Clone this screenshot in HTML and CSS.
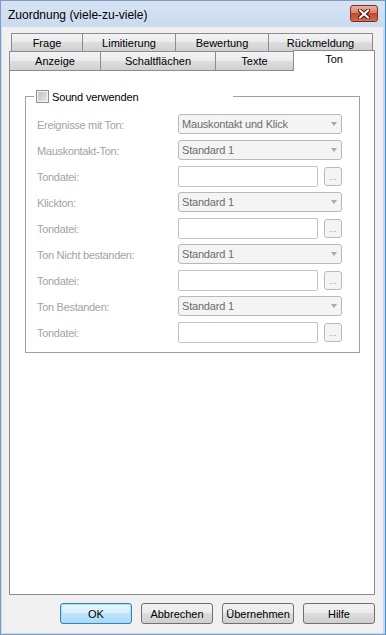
FILE: index.html
```html
<!DOCTYPE html>
<html lang="de">
<head>
  <meta charset="UTF-8" />
  <meta name="viewport" content="width=device-width, initial-scale=1.0"/>
  <title>Zuordnung (viele-zu-viele)</title>
  <link rel="stylesheet" href="styles.css">
</head>
<body>
  <div class="window">
    <div class="titlebar">
      <span class="title">Zuordnung (viele-zu-viele)</span>
      <div class="close">
        <svg width="12" height="10" viewBox="0 0 12 10">
          <path d="M2 1.5 L10 8.5 M10 1.5 L2 8.5" stroke="#3b1710" stroke-width="4" stroke-linecap="square"/>
          <path d="M2 1.5 L10 8.5 M10 1.5 L2 8.5" stroke="#ffffff" stroke-width="2" stroke-linecap="square"/>
        </svg>
      </div>
    </div>

    <div class="client">
      <div class="tabs">
        <div class="tab-row back">
          <div class="tab t-frage">Frage</div>
          <div class="tab t-limit">Limitierung</div>
          <div class="tab t-bewert">Bewertung</div>
          <div class="tab t-rueck">Rückmeldung</div>
        </div>
        <div class="tab-row front">
          <div class="tab t-anzeige">Anzeige</div>
          <div class="tab t-schalt">Schaltflächen</div>
          <div class="tab t-texte">Texte</div>
          <div class="tab t-ton active">Ton</div>
        </div>
      </div>

      <div class="page">
        <fieldset class="group">
          <legend><span class="legend-inner"><span class="check"></span>Sound verwenden</span></legend>
          <div class="form">
            <label>Ereignisse mit Ton:</label>
            <div class="combo"><span>Mauskontakt und Klick</span><i class="arrow"></i></div>

            <label>Mauskontakt-Ton:</label>
            <div class="combo"><span>Standard 1</span><i class="arrow"></i></div>

            <label>Tondatei:</label>
            <div class="file"><span class="edit"></span><span class="browse">...</span></div>

            <label>Klickton:</label>
            <div class="combo"><span>Standard 1</span><i class="arrow"></i></div>

            <label>Tondatei:</label>
            <div class="file"><span class="edit"></span><span class="browse">...</span></div>

            <label>Ton Nicht bestanden:</label>
            <div class="combo"><span>Standard 1</span><i class="arrow"></i></div>

            <label>Tondatei:</label>
            <div class="file"><span class="edit"></span><span class="browse">...</span></div>

            <label>Ton Bestanden:</label>
            <div class="combo"><span>Standard 1</span><i class="arrow"></i></div>

            <label>Tondatei:</label>
            <div class="file"><span class="edit"></span><span class="browse">...</span></div>
          </div>
        </fieldset>
      </div>

      <div class="buttons">
        <button class="btn default">OK</button>
        <button class="btn">Abbrechen</button>
        <button class="btn">Übernehmen</button>
        <button class="btn">Hilfe</button>
      </div>
    </div>
  </div>
</body>
</html>
```

FILE: styles.css
```css
body {
  margin: 0;
  font-family: "Liberation Sans", Arial, sans-serif;
  font-size: 11px;
  color: #000;
}

.window {
  width: 386px;
  height: 635px;
  box-sizing: border-box;
  border: 1px solid #7f9cc0;
  border-right-color: #3b8fd6;
  padding: 0 2px 1px 1px;
  background: linear-gradient(#d6e3f3, #c8d9ee 30px, #c8d9ee);
  display: flex;
  flex-direction: column;
}

/* Titelleiste */
.titlebar {
  height: 26px;
  box-sizing: border-box;
  display: flex;
  justify-content: space-between;
  align-items: center;
  padding: 1px 5px 0 6px;
}

.title {
  font-size: 12px;
}

.close {
  width: 28px;
  height: 17px;
  box-sizing: border-box;
  border: 1px solid #7a3022;
  border-radius: 3px;
  background: linear-gradient(#eab2a5, #d9806c 45%, #c7472d 50%, #d4694f);
  display: flex;
  align-items: center;
  justify-content: center;
  margin-top: -2px;
}

.client {
  flex: 1;
  background: #f0f0f0;
  padding: 6px 8px 9px 7px;
  display: flex;
  flex-direction: column;
}

/* Reiter */
.tabs {
  height: 37px;
  display: flex;
  flex-direction: column;
}

.tab-row {
  display: flex;
}

.tab-row.back {
  height: 18px;
  margin-left: 2px;
}

.tab-row.front {
  height: 19px;
}

.tab {
  box-sizing: border-box;
  border: 1px solid #898c95;
  border-bottom: none;
  margin-right: -1px;
  background: linear-gradient(#f3f3f3, #ebebeb 50%, #dedede 50%, #d0d0d0);
  display: flex;
  align-items: center;
  justify-content: center;
}

.t-frage { width: 72px; }
.t-limit { width: 94px; }
.t-bewert { width: 94px; }
.t-rueck { width: 105px; }
.t-anzeige { width: 92px; }
.t-schalt { width: 116px; }
.t-texte { width: 79px; }
.t-ton { width: 82px; }

.tab.active {
  background: #fff;
  height: 21px;
  margin-top: -1px;
  padding-bottom: 4px;
  position: relative;
  z-index: 1;
}

/* Seite */
.page {
  height: 525px;
  box-sizing: border-box;
  border: 1px solid #898c95;
  background: #fff;
  padding: 18px 14px 0 15px;
}

.group {
  margin: 0;
  border: 1px solid #a0a0a0;
  padding: 10px 17px 9px 11px;
}

.group legend {
  width: 199px;
  box-sizing: border-box;
  padding: 0 0 0 2px;
  margin-left: -3px;
}

.legend-inner {
  display: flex;
  align-items: center;
  gap: 3px;
  height: 15px;
  letter-spacing: -0.15px;
}

.check {
  width: 13px;
  height: 13px;
  box-sizing: border-box;
  border: 1px solid #8e8f8f;
  box-shadow: inset 0 0 0 1px #f4f4f4;
  background: linear-gradient(135deg, #b9bdc3, #ececec);
}

.form {
  display: grid;
  grid-template-columns: 141px 164px;
  grid-auto-rows: 21px;
  row-gap: 5px;
}

.form label {
  color: #a3a3a3;
  align-self: center;
  letter-spacing: -0.3px;
}

.combo {
  height: 20px;
  box-sizing: border-box;
  border: 1px solid #b9b9b9;
  border-radius: 3px;
  background: #f4f4f4;
  color: #6d6d6d;
  display: flex;
  align-items: center;
  justify-content: space-between;
  padding: 0 4px 0 3px;
  letter-spacing: -0.2px;
}

.arrow {
  width: 0;
  height: 0;
  border-left: 3px solid transparent;
  border-right: 3px solid transparent;
  border-top: 4px solid #a8a8a8;
}

.file {
  display: flex;
  align-items: center;
  gap: 6px;
}

.edit {
  width: 140px;
  height: 21px;
  box-sizing: border-box;
  border: 1px solid #c3c3c3;
  border-radius: 2px;
  background: #fff;
}

.browse {
  width: 18px;
  height: 19px;
  box-sizing: border-box;
  border: 1px solid #bababa;
  border-radius: 3px;
  background: #f4f4f4;
  color: #9b9b9b;
  font-size: 9px;
  display: flex;
  align-items: flex-end;
  justify-content: center;
  padding-bottom: 3px;
  line-height: 9px;
}

/* Schaltflächen unten */
.buttons {
  display: flex;
  justify-content: flex-end;
  gap: 9px;
  margin-top: 8px;
}

.btn {
  width: 72px;
  height: 21px;
  box-sizing: border-box;
  border: 1px solid #707070;
  border-radius: 3px;
  background: linear-gradient(#f2f2f2, #ebebeb 50%, #dddddd 50%, #cfcfcf);
  font-family: inherit;
  font-size: 11px;
  color: #000;
  padding: 0;
}

.btn.default {
  border-color: #3c7fb1;
  box-shadow: inset 0 0 0 1px #9de2fb;
  background: linear-gradient(#eaf6fd, #d9f0fc 50%, #bee6fd 50%, #a7d9f5);
}
```
